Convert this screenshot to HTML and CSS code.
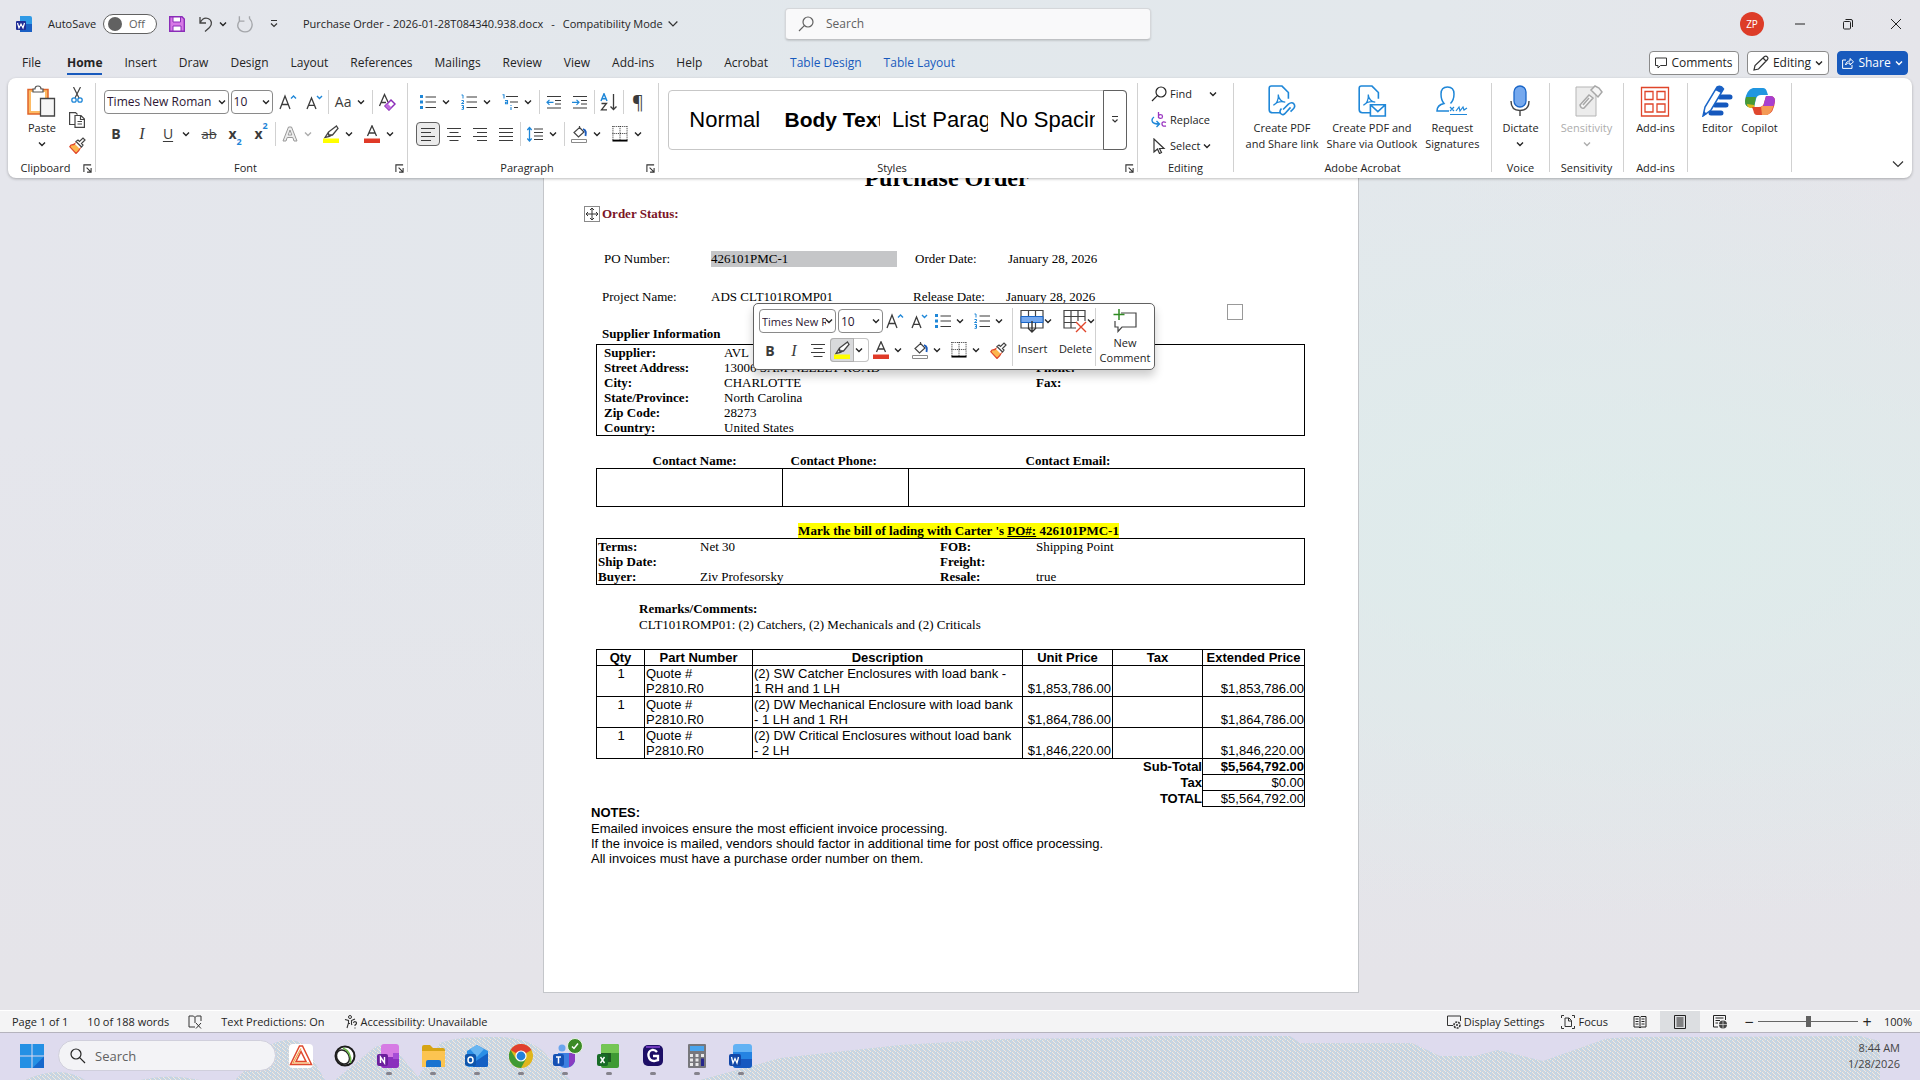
FILE: index.html
```html
<!DOCTYPE html>
<html lang="en">
<head>
<meta charset="utf-8">
<title>Purchase Order - 2026-01-28T084340.938.docx</title>
<link rel="stylesheet" href="styles.css">
</head>
<body>
<svg class="defs" aria-hidden="true">
  <symbol id="chev" viewBox="0 0 8 8"><path d="M1 2.500 4 5.500 7 2.500" fill="none" stroke="currentColor" stroke-width="1.400"/></symbol>
  <symbol id="launch" viewBox="0 0 10 10"><path d="M1 9V1H9M4 4 8.500 8.500M9 4.500V9H4.500" fill="none" stroke="#333" stroke-width="1.200"/></symbol>
  <symbol id="search" viewBox="0 0 16 16"><circle cx="10" cy="6" r="5" fill="none" stroke="currentColor" stroke-width="1.200"/><path d="M6.300 9.700 1 15" stroke="currentColor" stroke-width="1.200"/></symbol>
  <symbol id="grow" viewBox="0 0 18 16"><path d="M1 15 6 2 11 15M2.800 10.500H9.200" fill="none" stroke="#3b3b3b" stroke-width="1.300"/><path d="M12 4.500 14.500 2 17 4.500" fill="none" stroke="#1f87d8" stroke-width="1.400"/></symbol>
  <symbol id="shrink" viewBox="0 0 18 16"><path d="M2 15 6.500 4 11 15M3.500 11.300H9.500" fill="none" stroke="#3b3b3b" stroke-width="1.300"/><path d="M12 2 14.500 4.500 17 2" fill="none" stroke="#1f87d8" stroke-width="1.400"/></symbol>
  <symbol id="bullets" viewBox="0 0 16 16"><path d="M5.500 3H16M5.500 8H16M5.500 13.500H16" stroke="#3b3b3b" stroke-width="1.200"/><path d="M0 1H3V4H0ZM0 6.500H3V9.500H0ZM0 12H3V15H0Z" fill="#1f87d8"/></symbol>
  <symbol id="numbers" viewBox="0 0 16 16"><path d="M5.500 3H16M5.500 8H16M5.500 13.500H16" stroke="#3b3b3b" stroke-width="1.200"/><path d="M.5 1H2V4.500M.5 6.500H2.500V8L.500 9.500H3M.5 11.500H2.500V15.300H.5M1 13.400H2.500" fill="none" stroke="#1f87d8"/></symbol>
  <symbol id="multi" viewBox="0 0 16 16"><path d="M4 2.500H16M8 8H16M12 13.500H16" stroke="#3b3b3b" stroke-width="1.200"/><path d="M.5 .8H2V4.500M3 6.500H5.500V9.800H3.500V8.200H5.500M9 11V12M9 13V16" fill="none" stroke="#1f87d8" stroke-width="1.100"/></symbol>
  <symbol id="outdent" viewBox="0 0 16 16"><path d="M1 2.500H15M9 6.500H15M9 10H15M1 14H15" stroke="#3b3b3b" stroke-width="1.200"/><path d="M7.500 8.300H1M3.500 5.800 1 8.300 3.500 10.800" fill="none" stroke="#1f87d8" stroke-width="1.200"/></symbol>
  <symbol id="indent" viewBox="0 0 16 16"><path d="M1 2.500H15M9 6.500H15M9 10H15M1 14H15" stroke="#3b3b3b" stroke-width="1.200"/><path d="M0 8.300H7M4.500 5.800 7 8.300 4.500 10.800" fill="none" stroke="#1f87d8" stroke-width="1.200"/></symbol>
  <symbol id="al" viewBox="0 0 16 16"><path d="M1 2.500H15M1 6.500H11M1 10.500H15M1 14.500H11" stroke="#3b3b3b" stroke-width="1.200"/></symbol>
  <symbol id="ac" viewBox="0 0 16 16"><path d="M1 2.500H15M3.500 6.500H12.500M1 10.500H15M3.500 14.500H12.500" stroke="#3b3b3b" stroke-width="1.200"/></symbol>
  <symbol id="ar" viewBox="0 0 16 16"><path d="M1 2.500H15M5 6.500H15M1 10.500H15M5 14.500H15" stroke="#3b3b3b" stroke-width="1.200"/></symbol>
  <symbol id="aj" viewBox="0 0 16 16"><path d="M1 2.500H15M1 6.500H15M1 10.500H15M1 14.500H15" stroke="#3b3b3b" stroke-width="1.200"/></symbol>
  <symbol id="spacing" viewBox="0 0 16 16"><path d="M7 3H16M7 6.500H16M7 10H16M7 13.500H16" stroke="#3b3b3b" stroke-width="1.200"/><path d="M2.500 1.500V15M.3 4 2.500 1.500 4.700 4M.3 12.500 2.500 15 4.700 12.500" fill="none" stroke="#1f87d8" stroke-width="1.300"/></symbol>
  <symbol id="sort" viewBox="0 0 18 18"><path d="M1 8 4 .8 7 8M2 5.800H6" fill="none" stroke="#1f87d8" stroke-width="1.500"/><path d="M1.500 10.500H6.500L1.500 16.800H7M13.500 1V16.500M10.500 13.500 13.500 16.500 16.500 13.500" fill="none" stroke="#3b3b3b" stroke-width="1.300"/></symbol>
  <symbol id="high" viewBox="0 0 16 18"><path d="M13.500 1 15 3.500 9.500 10H5.500V7ZM5.500 7 2 12.500 6.500 11.500 9 10" fill="#fff" stroke="#444" stroke-width="1.300"/><path d="M0 13.500H16V18H0Z" fill="#ff0"/></symbol>
  <symbol id="fcolor" viewBox="0 0 16 18"><path d="M3.500 11 8 .8 12.500 11M5 8H11" fill="none" stroke="#3b3b3b" stroke-width="1.300"/><path d="M0 13.500H16V18H0Z" fill="#e03a28"/></symbol>
  <symbol id="bucket" viewBox="0 0 16 18"><path d="M8.500 1V4M8.500 2.500 13 7 7.500 12 3 7.500Z" fill="#fff" stroke="#444" stroke-width="1.200"/><path d="M12 4C15.500 5 15 8 14.500 11" fill="none" stroke="#1b5cbe" stroke-width="1.800"/><path d="M.5 14.500H15.500V17.500H.5Z" fill="#fff" stroke="#8a8a8a"/></symbol>
  <symbol id="borders" viewBox="0 0 16 17"><path d="M.5 0V15M8 0V15M15.500 0V15M0 .5H16M0 8H16" stroke="#222" stroke-width="1" stroke-dasharray="1 1"/><path d="M0 15.500H16" stroke="#000" stroke-width="2"/></symbol>
  <symbol id="brush" viewBox="0 0 17 17"><path d="M2 8C4 8 5.500 7.500 7 6L11.500 10.500C10.500 13 9 15 7 16.500L.8 9.800Z" fill="#fcb64e" stroke="#e0452a" stroke-width="1.200"/><path d="M7 6 11.500 10.500" stroke="#fff" stroke-width="3"/><path d="M7 4.500 9 3 10.500 4.500 14 1 16 3 12.500 6.500 14 8 12.500 10Z" fill="#fff" stroke="#444" stroke-width="1.200"/></symbol>
  <symbol id="pdf" viewBox="0 0 28 30"><path d="M20 9V7L14 1H4Q2 1 2 3V23Q2 26 5 26H13M20 7V13" fill="none" stroke="#1f87d8" stroke-width="1.500"/><path d="M6 19C9 18 11 13 10.500 9C10.500 13 14 16 17 16C13 15 9 16 6 19Z" fill="none" stroke="#1f87d8" stroke-width="1.200"/></symbol>
</svg>

<div class="window">
<header class="titlebar">
  <div class="quick">
    <svg class="i16" viewBox="0 0 16 16"><path d="M4 0H14Q16 0 16 2V16H4Z" fill="#2f9ae6"/><path d="M4 8H16V16H4Z" fill="#1a5fc4"/><rect y="5" width="10" height="9" rx="1" fill="#1f2c96"/><path d="M1.500 7 3 12 5 8 7 12 8.500 7" fill="none" stroke="#fff" stroke-width="1.200"/></svg>
    <span class="autosave">AutoSave</span>
    <button class="toggle" role="switch" aria-checked="false"><i></i>Off</button>
    <button class="plain"><svg class="i16" viewBox="0 0 16 16"><path d="M.7.700H13L15.300 3V15.300H.7Z" fill="#d779e6" stroke="#8a2db8" stroke-width="1.400"/><path d="M4 1H11.500V6H4ZM4 10H12V15H4Z" fill="#fff" stroke="#8a2db8"/></svg></button>
    <button class="plain undo"><svg class="i16" viewBox="0 0 16 16"><path d="M2 1V7H8M2 7C4 3 7 1.500 10 2.500C14 4 14.500 8.500 11.500 11.500L7 15.500" fill="none" stroke="#444" stroke-width="1.300"/></svg><svg class="i8"><use href="#chev"/></svg></button>
    <button class="plain dim"><svg class="i18" viewBox="0 0 16 16"><path d="M3 1V5.500H7.500M3 5.500C-.5 10 3 15 8 15C14 15 16.500 8 12 3M12 3V1" fill="none" stroke="#a4a6aa" stroke-width="1.200"/></svg></button>
    <button class="plain more"><svg class="i8" viewBox="0 0 8 8"><path d="M1 .5H7M1 3.500 4 6.500 7 3.500" fill="none" stroke="#333" stroke-width="1.200"/></svg></button>
    <span class="docname"><span>Purchase Order - 2026-01-28T084340.938.docx</span><span>-</span><span>Compatibility Mode</span></span>
    <svg class="i10" viewBox="0 0 8 8"><path d="M.5 2 4 5.500 7.500 2" fill="none" stroke="#333"/></svg>
  </div>
  <label class="finder"><svg class="i16"><use href="#search"/></svg><input type="text" placeholder="Search"></label>
  <div class="sysbtns">
    <button class="avatar">ZP</button>
    <button class="plain"><svg class="i12" viewBox="0 0 12 12"><path d="M1 6H11" stroke="#222"/></svg></button>
    <button class="plain"><svg class="i12" viewBox="0 0 12 12"><rect x="1.500" y="3.500" width="7" height="7.500" rx="1" fill="none" stroke="#222"/><path d="M3.500 1.500H9Q10.500 1.500 10.500 3V9" fill="none" stroke="#222"/></svg></button>
    <button class="plain"><svg class="i12" viewBox="0 0 12 12"><path d="M1 1 11 11M11 1 1 11" stroke="#222"/></svg></button>
  </div>
</header>

<nav class="tabs">
  <a href="#" class="file">File</a><a href="#" class="on">Home</a><a href="#">Insert</a><a href="#">Draw</a><a href="#">Design</a><a href="#">Layout</a><a href="#">References</a><a href="#">Mailings</a><a href="#">Review</a><a href="#">View</a><a href="#">Add-ins</a><a href="#">Help</a><a href="#">Acrobat</a><a href="#" class="ctx">Table Design</a><a href="#" class="ctx">Table Layout</a>
  <div class="tabbtns">
    <button class="w90"><svg class="i12" viewBox="0 0 12 12"><path d="M.5 1H11.500V8.500H5.500L3 11V8.500H.5Z" fill="none" stroke="#333"/></svg>Comments</button>
    <button class="w82"><svg class="i16" viewBox="0 0 16 16"><path d="M1 15 2 10.500 11.500 1.500Q13 .5 14.300 1.800Q15.500 3 14.500 4.500L5.500 14ZM10 3 13 6" fill="none" stroke="#333" stroke-width="1.200"/></svg>Editing<svg class="i8"><use href="#chev"/></svg></button>
    <button class="share"><svg class="i12" viewBox="0 0 12 12"><path d="M4 3H.6V11.400H10V8M3.500 8C4 5 6 4 8 4V1.500L11.500 4.800 8 8V6C6 6 4.500 6.500 3.500 8Z" fill="none" stroke="#fff"/></svg>Share<svg class="i8"><use href="#chev"/></svg></button>
  </div>
</nav>

<section class="ribbon">
  <div class="group g-clip">
    <div class="body split">
      <button class="big"><svg class="i32" viewBox="0 0 32 32"><path d="M2 4.500H22V29H2Z" fill="#fdbb64" stroke="#e0642a" stroke-width="1.500"/><path d="M5 7H19V26H5Z" fill="#fff"/><path d="M7 7V4H9Q9 1 12 1Q15 1 15 4H17V7Z" fill="#fff" stroke="#555" stroke-width="1.200"/><path d="M14.500 13.500H28.500V31H14.500Z" fill="#f6f6f6" stroke="#444" stroke-width="1.300"/></svg>Paste<svg class="i8"><use href="#chev"/></svg></button>
      <div class="stack">
        <button class="tool"><svg class="i16" viewBox="0 0 16 16"><path d="M4.500 0 10 11M11.500 0 6 11" stroke="#444" stroke-width="1.200"/><circle cx="5" cy="13" r="2.200" fill="none" stroke="#1f87d8" stroke-width="1.300"/><circle cx="11" cy="13" r="2.200" fill="none" stroke="#1f87d8" stroke-width="1.300"/></svg></button>
        <button class="tool"><svg class="i16" viewBox="0 0 16 16"><path d="M6 12.500H.6V.6H6.500L8.500 2.500" fill="none" stroke="#444" stroke-width="1.200"/><path d="M6 3.500H12L15.400 7V15.400H6ZM11.500 3.500V7.500H15.400M8.500 9.500H13M8.500 12H13" fill="#fff" stroke="#444" stroke-width="1.200"/></svg></button>
        <button class="tool"><svg class="i17"><use href="#brush"/></svg></button>
      </div>
    </div>
    <div class="foot"><span>Clipboard</span><button><svg class="i9"><use href="#launch"/></svg></button></div>
  </div>
  <div class="rule"></div>

  <div class="group g-font">
    <div class="body rows">
      <div class="row">
        <span class="combo face"><select aria-label="Font"><option>Times New Roman</option></select><svg class="i8"><use href="#chev"/></svg></span>
        <span class="combo size"><select aria-label="Font size"><option>10</option></select><svg class="i8"><use href="#chev"/></svg></span>
        <button class="tool"><svg class="i18"><use href="#grow"/></svg></button><button class="tool"><svg class="i18"><use href="#shrink"/></svg></button>
        <i class="sep"></i>
        <button class="tool aa">Aa</button><button class="drop"><svg class="i8"><use href="#chev"/></svg></button>
        <i class="sep"></i>
        <button class="tool"><svg class="i18" viewBox="0 0 18 18"><path d="M1.500 13 6.500 1.500 10 9M3 9.500H8" fill="none" stroke="#3b3b3b" stroke-width="1.300"/><path d="M13 7 17 11 11 17 7 13Z" fill="#fff" stroke="#8a2db8" stroke-width="1.500"/><path d="M9.500 10.500 13.500 14.500 11 17 7 13Z" fill="#c06be0"/></svg></button>
      </div>
      <div class="row back">
        <button class="tool b">B</button><button class="tool it">I</button><button class="tool u">U</button><button class="drop"><svg class="i8"><use href="#chev"/></svg></button>
        <button class="tool st">ab</button><button class="tool b">x<sub>2</sub></button><button class="tool b">x<sup>2</sup></button>
        <i class="sep"></i>
        <button class="tool"><svg class="i16" viewBox="0 0 16 16"><path d="M1 15 6.500 1H9.500L15 15H12L10.800 11.500H5.200L4 15ZM6.200 9H9.800L8 4Z" fill="#eee" stroke="#999"/></svg></button><button class="drop dim"><svg class="i8"><use href="#chev"/></svg></button>
        <button class="tool"><svg class="i18"><use href="#high"/></svg></button><button class="drop"><svg class="i8"><use href="#chev"/></svg></button>
        <button class="tool"><svg class="i18"><use href="#fcolor"/></svg></button><button class="drop"><svg class="i8"><use href="#chev"/></svg></button>
      </div>
    </div>
    <div class="foot"><span>Font</span><button><svg class="i9"><use href="#launch"/></svg></button></div>
  </div>
  <div class="rule"></div>

  <div class="group g-para">
    <div class="body rows">
      <div class="row">
        <button class="tool"><svg class="i16"><use href="#bullets"/></svg></button><button class="drop"><svg class="i8"><use href="#chev"/></svg></button>
        <button class="tool"><svg class="i16"><use href="#numbers"/></svg></button><button class="drop"><svg class="i8"><use href="#chev"/></svg></button>
        <button class="tool"><svg class="i16"><use href="#multi"/></svg></button><button class="drop"><svg class="i8"><use href="#chev"/></svg></button>
        <i class="sep"></i>
        <button class="tool"><svg class="i16"><use href="#outdent"/></svg></button><button class="tool"><svg class="i16"><use href="#indent"/></svg></button>
        <i class="sep"></i>
        <button class="tool"><svg class="i18"><use href="#sort"/></svg></button>
        <i class="sep"></i>
        <button class="tool pil">¶</button>
      </div>
      <div class="row">
        <button class="tool pressed"><svg class="i16"><use href="#al"/></svg></button><button class="tool"><svg class="i16"><use href="#ac"/></svg></button><button class="tool"><svg class="i16"><use href="#ar"/></svg></button><button class="tool"><svg class="i16"><use href="#aj"/></svg></button>
        <i class="sep"></i>
        <button class="tool"><svg class="i16"><use href="#spacing"/></svg></button><button class="drop"><svg class="i8"><use href="#chev"/></svg></button>
        <i class="sep"></i>
        <button class="tool"><svg class="i18"><use href="#bucket"/></svg></button><button class="drop"><svg class="i8"><use href="#chev"/></svg></button>
        <button class="tool"><svg class="i16"><use href="#borders"/></svg></button><button class="drop"><svg class="i8"><use href="#chev"/></svg></button>
      </div>
    </div>
    <div class="foot"><span>Paragraph</span><button><svg class="i9"><use href="#launch"/></svg></button></div>
  </div>
  <div class="rule"></div>

  <div class="group g-style">
    <div class="body">
      <div class="gallery">
        <button class="st-item mid">Normal</button><button class="st-item b">Body Text</button><button class="st-item">List Paragraph</button><button class="st-item">No Spacing</button>
        <button class="st-more"><svg class="i8" viewBox="0 0 8 8"><path d="M1 .5H7M1.500 3.500 4 6 6.500 3.500" fill="none" stroke="#333" stroke-width="1.200"/></svg></button>
      </div>
    </div>
    <div class="foot"><span>Styles</span><button><svg class="i9"><use href="#launch"/></svg></button></div>
  </div>
  <div class="rule"></div>

  <div class="group g-edit">
    <div class="body editlist">
      <button><svg class="i16"><use href="#search"/></svg>Find<svg class="i8 far"><use href="#chev"/></svg></button>
      <button><svg class="i16" viewBox="0 0 16 16"><path d="M7.500 0V6M7.500 3.500Q9 2 11 3Q12 4.500 11 6Q9 7 7.500 5.500M15 10.500Q12 9 11 11Q10.500 15 15 14" fill="none" stroke="#9a35c0" stroke-width="1.300"/><path d="M3 5Q0 7 1.500 10Q3 12 8 12M5.500 9 8.500 12 5.500 15" fill="none" stroke="#1f87d8" stroke-width="1.400"/></svg>Replace</button>
      <button><svg class="i16" viewBox="0 0 16 16"><path d="M3 1V14L6.500 11 8.500 15.500 10.500 14.500 8.500 10.500H13Z" fill="#fff" stroke="#333" stroke-width="1.200"/></svg>Select<svg class="i8"><use href="#chev"/></svg></button>
    </div>
    <div class="foot"><span>Editing</span></div>
  </div>
  <div class="rule"></div>

  <div class="group g-acro">
    <div class="body bigs">
      <button class="big"><svg class="i32" viewBox="0 0 28 30"><use href="#pdf" width="28" height="30"/><path d="M15 23 20 18Q23 15.500 25 17.500Q27 20 24.500 22.500L22 25M22 21 17.500 26Q15 29 13 27Q11 25 13.500 22" fill="none" stroke="#1f87d8" stroke-width="1.500"/></svg>Create PDF<br>and Share link</button>
      <button class="big"><svg class="i32" viewBox="0 0 28 30"><use href="#pdf" width="28" height="30"/><path d="M12.500 18.500H26.500V29H12.500ZM12.500 18.500 19.500 25 26.500 18.500" fill="#fff" stroke="#1f87d8" stroke-width="1.500"/></svg>Create PDF and<br>Share via Outlook</button>
      <button class="big"><svg class="i32" viewBox="0 0 32 32"><path d="M13 26H1Q1 20 8 18.500Q5 15 5 9Q5 2 11.500 2Q18 2 18 9Q18 15 14.500 18.500" fill="none" stroke="#1f87d8" stroke-width="1.500"/><path d="M14 22 18 26M18 22 14 26M20 26 23 22 24 26 27 22 28 25 31 23M14 29.500H31" fill="none" stroke="#1f87d8" stroke-width="1.200"/></svg>Request<br>Signatures</button>
    </div>
    <div class="foot"><span>Adobe Acrobat</span></div>
  </div>
  <div class="rule"></div>

  <div class="group g-voice">
    <div class="body bigs"><button class="big"><svg class="i32" viewBox="0 0 32 32"><rect x="10" y="1" width="12" height="21" rx="6" fill="#76a9ee" stroke="#1a66c8" stroke-width="1.300"/><path d="M7 16Q7 25.500 16 25.500Q25 25.500 25 16M16 25.500V31" fill="none" stroke="#444" stroke-width="1.400"/></svg>Dictate<svg class="i8"><use href="#chev"/></svg></button></div>
    <div class="foot"><span>Voice</span></div>
  </div>
  <div class="rule"></div>

  <div class="group g-sens">
    <div class="body bigs"><button class="big dim"><svg class="i32" viewBox="0 0 32 32"><path d="M5 2H25V31H5Z" fill="#ececec" stroke="#b5b5b5"/><path d="M9 20 18 10 22 13 13 23Q10 24 9 20ZM12 20 18 13M20 5 24 1 28 3 31 7 27 12Z" fill="#f6f6f6" stroke="#a8a8a8" stroke-width="1.500"/></svg>Sensitivity<svg class="i8"><use href="#chev"/></svg></button></div>
    <div class="foot"><span>Sensitivity</span></div>
  </div>
  <div class="rule"></div>

  <div class="group g-add">
    <div class="body bigs"><button class="big"><svg class="i32" viewBox="0 0 32 32"><path d="M2.500 2.500H29.500V31H2.500ZM6 6.500H14V14.500H6ZM18 6.500H26V14.500H18ZM6 19H14V27H6ZM18 19H26V27H18Z" fill="none" stroke="#e0452a" stroke-width="1.300"/></svg>Add-ins</button></div>
    <div class="foot"><span>Add-ins</span></div>
  </div>
  <div class="rule"></div>

  <div class="group g-copilot">
    <div class="body bigs">
      <button class="big"><svg class="i32" viewBox="0 0 32 32"><path d="M19 12H29M14 20H25M10 28H20" stroke="#1558bd" stroke-width="5" stroke-linecap="round"/><path d="M2 31 4 22 16 2Q20 0 22.500 4L10 25Z" fill="#fff" stroke="#1a66c8" stroke-width="1.500"/><path d="M16 2Q20 0 22.500 4L20 8 14 5Z" fill="#1a5fc4"/><path d="M2 31 3 26 6 29Z" fill="#1a5fc4"/></svg>Editor</button>
      <button class="big"><svg class="i32" viewBox="0 0 32 32"><path d="M9 3H19Q22 3 23 7L24 10H17Q13 10 12 14L10 22H6Q1 22 1 16Q2 5 9 3Z" fill="#2196e0"/><path d="M2 12H12L10 22H6Q1 22 1 16Z" fill="#4a9a34"/><path d="M3 19 10 20 11 23H6Q3 22 3 19Z" fill="#dcb51d"/><path d="M23 30H13Q10 30 9.500 26L8 22H15Q19 22 20 18L22 11H26Q31 11 31 16Q30 28 23 30Z" fill="#e0482e"/><path d="M22 11H26Q31 11 31 16Q30.500 19 29.500 21H19Q20 20 20 18Z" fill="#a83fd0"/><path d="M17 21H29.500Q27 29 23 30H18Z" fill="#f49a55"/></svg>Copilot</button>
    </div>
  </div>
  <div class="rule"></div>
  <button class="collapse"><svg class="i12" viewBox="0 0 12 12"><path d="M1 3.500 6 8.500 11 3.500" fill="none" stroke="#333" stroke-width="1.200"/></svg></button>
</section>

<main class="workspace">
  <article class="page">
    <h1>Purchase Order</h1>
    <span class="anchor"><svg class="i14" viewBox="0 0 14 14"><path d="M7 1V13M1 7H13M5 3 7 1 9 3M5 11 7 13 9 11M3 5 1 7 3 9M11 5 13 7 11 9" fill="none" stroke="#333"/></svg></span>
    <span class="handle"></span>
    <h2 class="status">Order Status:</h2>
    <div class="facts in"><span>PO Number:</span><mark>426101PMC-1</mark><span>Order Date:</span><span>January 28, 2026</span></div>
    <div class="facts second"><span>Project Name:</span><span>ADS CLT101ROMP01</span><span>Release Date:</span><span>January 28, 2026</span></div>
    <h2 class="supplier">Supplier Information</h2>
    <table class="boxed info">
      <tr><th>Supplier:</th><td>AVL</td><th></th></tr>
      <tr><th>Street Address:</th><td>13006 SAM NEELLY ROAD</td><th>Phone:</th></tr>
      <tr><th>City:</th><td>CHARLOTTE</td><th>Fax:</th></tr>
      <tr><th>State/Province:</th><td>North Carolina</td><th></th></tr>
      <tr><th>Zip Code:</th><td>28273</td><th></th></tr>
      <tr><th>Country:</th><td>United States</td><th></th></tr>
    </table>
    <table class="contacts">
      <thead><tr><th class="c1">Contact Name:</th><th class="c2">Contact Phone:</th><th class="c3">Contact Email:</th></tr></thead>
      <tbody><tr><td></td><td></td><td></td></tr></tbody>
    </table>
    <p class="lading"><span>Mark the bill of lading with Carter 's <u>PO#:</u> 426101PMC-1</span></p>
    <table class="boxed terms">
      <tr><th>Terms:</th><td>Net 30</td><th>FOB:</th><td>Shipping Point</td></tr>
      <tr><th>Ship Date:</th><td></td><th>Freight:</th><td></td></tr>
      <tr><th>Buyer:</th><td>Ziv Profesorsky</td><th>Resale:</th><td>true</td></tr>
    </table>
    <div class="remarks"><b>Remarks/Comments:</b><p>CLT101ROMP01: (2) Catchers, (2) Mechanicals and (2) Criticals</p></div>
    <table class="items">
      <colgroup><col class="k1"><col class="k2"><col class="k3"><col class="k4"><col class="k5"><col></colgroup>
      <thead><tr><th>Qty</th><th>Part Number</th><th>Description</th><th>Unit Price</th><th>Tax</th><th>Extended Price</th></tr></thead>
      <tbody>
        <tr><td class="q">1</td><td>Quote #<br>P2810.R0</td><td>(2) SW Catcher Enclosures with load bank -<br>1 RH and 1 LH</td><td class="n">$1,853,786.00</td><td></td><td class="n">$1,853,786.00</td></tr>
        <tr><td class="q">1</td><td>Quote #<br>P2810.R0</td><td>(2) DW Mechanical Enclosure with load bank<br>- 1 LH and 1 RH</td><td class="n">$1,864,786.00</td><td></td><td class="n">$1,864,786.00</td></tr>
        <tr><td class="q">1</td><td>Quote #<br>P2810.R0</td><td>(2) DW Critical Enclosures without load bank<br>- 2 LH</td><td class="n">$1,846,220.00</td><td></td><td class="n">$1,846,220.00</td></tr>
      </tbody>
      <tfoot>
        <tr><th colspan="5">Sub-Total</th><td class="n"><b>$5,564,792.00</b></td></tr>
        <tr><th colspan="5">Tax</th><td class="n">$0.00</td></tr>
        <tr><th colspan="5">TOTAL</th><td class="n">$5,564,792.00</td></tr>
      </tfoot>
    </table>
    <div class="notes"><b>NOTES:</b><p>Emailed invoices ensure the most efficient invoice processing.</p><p>If the invoice is mailed, vendors should factor in additional time for post office processing.</p><p>All invoices must have a purchase order number on them.</p></div>

    <div class="mini">
      <div class="rows">
        <div class="row">
          <span class="combo face"><select aria-label="Font"><option>Times New Roman</option></select><svg class="i8"><use href="#chev"/></svg></span>
          <span class="combo size"><select aria-label="Font size"><option>10</option></select><svg class="i8"><use href="#chev"/></svg></span>
          <button class="tool"><svg class="i18"><use href="#grow"/></svg></button><button class="tool"><svg class="i18"><use href="#shrink"/></svg></button>
          <button class="tool"><svg class="i16"><use href="#bullets"/></svg></button><button class="drop"><svg class="i8"><use href="#chev"/></svg></button>
          <button class="tool"><svg class="i16"><use href="#numbers"/></svg></button><button class="drop"><svg class="i8"><use href="#chev"/></svg></button>
        </div>
        <div class="row back">
          <button class="tool b">B</button><button class="tool it">I</button><button class="tool"><svg class="i16"><use href="#ac"/></svg></button>
          <span class="pair"><button class="tool"><svg class="i18"><use href="#high"/></svg></button><button class="drop"><svg class="i8"><use href="#chev"/></svg></button></span>
          <button class="tool"><svg class="i18"><use href="#fcolor"/></svg></button><button class="drop"><svg class="i8"><use href="#chev"/></svg></button>
          <button class="tool"><svg class="i18"><use href="#bucket"/></svg></button><button class="drop"><svg class="i8"><use href="#chev"/></svg></button>
          <button class="tool"><svg class="i16"><use href="#borders"/></svg></button><button class="drop"><svg class="i8"><use href="#chev"/></svg></button>
          <button class="tool"><svg class="i17"><use href="#brush"/></svg></button>
        </div>
      </div>
      <div class="cmd wide">
        <button><span><svg class="i24" viewBox="0 0 24 24"><path d="M1 1.500H23V19H1ZM8.500 1.500V19M15.500 1.500V19" fill="#fff" stroke="#444" stroke-width="1.200"/><path d="M1 7.500H23V13.500H1Z" fill="#76a9ee" stroke="#1a66c8"/><path d="M12 12V23M8 19 12 23 16 19" fill="none" stroke="#333" stroke-width="1.400"/></svg><svg class="i8"><use href="#chev"/></svg></span>Insert</button>
        <button><span><svg class="i24" viewBox="0 0 24 24"><path d="M13 19H1V1.500H22V12M8 1.500V19M15 1.500V12M1 7.500H22M1 13.500H14" fill="none" stroke="#444" stroke-width="1.200"/><path d="M13 13 23 23M23 13 13 23" stroke="#e0452a" stroke-width="1.400"/></svg><svg class="i8"><use href="#chev"/></svg></span>Delete</button>
      </div>
      <div class="cmd">
        <button class="tall"><svg class="i24" viewBox="0 0 24 24"><path d="M8 4H23V18H9L5 22.500V18H2V12" fill="#fff" stroke="#444" stroke-width="1.200"/><path d="M6 0V11M.5 5.500H11.500" stroke="#2f8a22" stroke-width="1.500"/></svg>New<br>Comment</button>
      </div>
    </div>
  </article>
</main>

<footer class="statusbar">
  <span>Page 1 of 1</span><span>10 of 188 words</span>
  <svg class="i14" viewBox="0 0 14 14"><path d="M7 12H1V1H5.500L7 2.500 8.500 1H13V6M7 2.500V8M8 8 13 13.500M13 8 8 13.500" fill="none" stroke="#333"/></svg>
  <span>Text Predictions: On</span>
  <span class="with"><svg class="i14" viewBox="0 0 14 14"><circle cx="6" cy="2" r="1.500" fill="none" stroke="#333"/><path d="M1 4.500 4.500 5.500V8L3 13M11 4 7.500 5.500V9L8 10M4.500 8.500 6 8.500M9.500 8Q10 6 12 7Q13.500 8.500 11 10V11M11 12.500V13.500" fill="none" stroke="#333" stroke-width="1.100"/></svg>Accessibility: Unavailable</span>
  <div class="views">
    <button class="with"><svg class="i14" viewBox="0 0 14 14"><path d="M6 10.500H.5V1H13.500V6" fill="none" stroke="#333"/><circle cx="10" cy="10" r="3" fill="none" stroke="#333" stroke-width="1.600" stroke-dasharray="2 1"/><circle cx="10" cy="10" r="1" fill="#333"/></svg>Display Settings</button>
    <button class="with focus"><svg class="i14" viewBox="0 0 14 14"><path d="M3 .5H.5V3M11 .5H13.500V3M.5 11V13.500H3M13.500 11V13.500H11M4 3H8L10.500 5.500V11.500H4ZM7.500 3V6H10.500" fill="none" stroke="#333"/></svg>Focus</button>
    <button class="view"><svg class="i14" viewBox="0 0 14 14"><path d="M1 1.500H6L7 2.500 8 1.500H13V12H8L7 13 6 12H1ZM7 2.500V13M2.500 4H5.500M2.500 6.500H5.500M2.500 9H5.500M8.500 4H11.500M8.500 6.500H11.500M8.500 9H11.500" fill="none" stroke="#222"/></svg></button>
    <button class="view on"><svg class="i14" viewBox="0 0 14 14"><path d="M1.500 .5H12.500V13.500H1.500ZM3.500 3H10.500M3.500 5H10.500M3.500 7H10.500M3.500 9H10.500M3.500 11H10.500" fill="none" stroke="#222"/></svg></button>
    <button class="view"><svg class="i14" viewBox="0 0 14 14"><path d="M5 12H.5V.5H12.500V5M2.500 3H10.500M2.500 5.500H7M2.500 8H5" fill="none" stroke="#222"/><circle cx="10" cy="9.500" r="4" fill="#444"/><path d="M6 9.500H14M10 5.500V13.500" stroke="#ddd" stroke-width=".7"/></svg></button>
    <span class="zoom"><button>−</button><input type="range" min="0" max="200" value="102" aria-label="Zoom"><button>+</button></span>
    <span class="pct">100%</span>
  </div>
</footer>

<nav class="taskbar">
  <svg class="hills" viewBox="0 0 1920 47" preserveAspectRatio="none">
    <pattern id="grain" width="5" height="4" patternUnits="userSpaceOnUse"><rect width="5" height="4" fill="#d0d4da"/><path d="M0 0H1V1H0ZM2 1H3V2H2ZM4 2H5V3H4ZM1 3H2V4H1Z" fill="#b4d6f0"/><path d="M3 0H4V1H3ZM0 2H1V3H0ZM2 3H3V4H2ZM4 1H5V2H4Z" fill="#eceae6"/></pattern>
    <path d="M25 47Q60 31 85 47ZM140 47Q170 40 200 47ZM235 47 270 12Q290 2 305 12L325 47ZM335 47 375 14Q388 8 400 22L418 44 440 10Q455 3 500 4Q530 5 545 20L570 47ZM700 47 780 25 900 12 1000 6 1100 5 1160 3H1290L1300 10H1412L1440 23H1475L1498 17 1543 28 1605 6Q1620 3 1700 4L1860 3 1880 8V47Z" fill="url(#grain)"/></svg>
  <button class="app start"><svg class="i24" viewBox="0 0 24 24"><path d="M0 0H11.500V11.500H0ZM12.500 0H24V11.500H12.500ZM0 12.500H11.500V24H0ZM12.500 12.500H24V24H12.500Z" fill="#2490e4"/><path d="M12.500 24H24V12.500Z" fill="#1668cc"/></svg></button>
  <label class="pill"><svg class="i16 flip"><use href="#search"/></svg><input type="text" placeholder="Search"></label>
  <div class="apps">
    <button class="app"><svg class="i24" viewBox="0 0 24 24"><rect width="24" height="24" rx="4" fill="#fff"/><path d="M10.500 2H13.500L22.500 20.500H1.500ZM12 7.500 7 17.500H17Z" fill="none" stroke="#e0482e" stroke-width="1.500"/><path d="M12 4.500 4 19H20" fill="none" stroke="#f2a54c" stroke-width="1.200"/></svg></button>
    <button class="app"><svg class="i24" viewBox="0 0 24 24"><circle cx="12" cy="12" r="9.500" fill="#fff" stroke="#1c1c1c" stroke-width="2"/><ellipse cx="10" cy="13" rx="6" ry="7.500" transform="rotate(-35 10 13)" fill="none" stroke="#222" stroke-width="1.500"/><path d="M10 4Q19 8 17.500 19" fill="none" stroke="#6bb84a" stroke-width="1.500"/></svg></button>
    <button class="app run"><svg class="i24" viewBox="0 0 24 24"><rect x="4" y="0" width="18" height="24" rx="3" fill="#d67be4"/><path d="M4 13H22V21Q22 24 19 24H7Q4 24 4 21Z" fill="#8b30bd"/><path d="M16 9H22V15H16Z" fill="#a64dd6"/><rect y="10" width="11" height="12" rx="2" fill="#6b1f9c"/><path d="M3.500 19V13L7.500 19V13" fill="none" stroke="#fff" stroke-width="1.400"/></svg></button>
    <button class="app run"><svg class="i24" viewBox="0 0 24 24"><path d="M1 3Q1 1 3 1H9L12 4H22Q24 4 24 6V23H1Z" fill="#d7a415"/><path d="M1 7H24V23H1Z" fill="#fcc451"/><path d="M5 23V18Q5 16 7 16H18Q20 16 20 18V23Z" fill="#1a73d0"/></svg></button>
    <button class="app run"><svg class="i24" viewBox="0 0 24 24"><path d="M2 7 12 1 23 7V21Q23 23 21 23H4Q2 23 2 21Z" fill="#2b8fe6"/><path d="M5 5 12 1 19 5 12 13Z" fill="#67b5f2"/><path d="M23 9 8 19V23H21Q23 23 23 21Z" fill="#1560c4"/><rect y="10" width="11" height="12" rx="2" fill="#0f55ab"/><ellipse cx="5.500" cy="16" rx="2.500" ry="3" fill="none" stroke="#fff" stroke-width="1.500"/></svg></button>
    <button class="app run"><svg class="i24" viewBox="0 0 24 24"><circle cx="12" cy="12" r="12" fill="#dfb61d"/><path d="M12 12 1.600 6A12 12 0 0 1 22.400 6Z" fill="#e0402e"/><path d="M1.600 6A12 12 0 0 0 12 24L17 15H7Z" fill="#3f9a34"/><circle cx="12" cy="12" r="5.600" fill="#fff"/><circle cx="12" cy="12" r="4.400" fill="#2380dc"/></svg></button>
    <button class="app run badge"><svg class="i24" viewBox="0 0 24 24"><circle cx="9" cy="4" r="3.500" fill="#6aa5ee"/><path d="M5 9H22V17Q20 24 12 24Q5 23 5 16Z" fill="#3d7fe0"/><path d="M16 9H22V17Q20 22 16 23Z" fill="#8a3cc0"/><rect y="10" width="11" height="12" rx="2" fill="#1551b4"/><path d="M3 13H8M5.500 13V19.500" stroke="#fff" stroke-width="1.500"/></svg><svg class="tick" viewBox="0 0 16 16"><circle cx="8" cy="8" r="7.500" fill="#3c8a26" stroke="#e8f4e4"/><path d="M5 8.500 7 10.500 11 5.500" fill="none" stroke="#fff" stroke-width="1.500"/></svg></button>
    <button class="app run"><svg class="i24" viewBox="0 0 24 24"><rect x="4" width="18" height="24" rx="2" fill="#3f9a34"/><path d="M4 2Q4 0 6 0H20Q22 0 22 2V9H4Z" fill="#74c654"/><path d="M4 9H14V18H4Z" fill="#1d5c22"/><rect y="10" width="11" height="12" rx="2" fill="#176b26"/><path d="M3.500 13 7.500 19M7.500 13 3.500 19" stroke="#fff" stroke-width="1.400"/></svg></button>
    <button class="app run"><svg class="i24" viewBox="0 0 24 24"><rect x="2" y="1" width="20" height="21" rx="5" fill="#1d0f66"/><path d="M16 8Q14 5.500 11 6Q7 7 7.500 12Q8.500 17 13 17L17 16V12H12" fill="none" stroke="#fff" stroke-width="2.300"/><path d="M5 3H19" stroke="#8a49d8" stroke-width="1.500"/></svg></button>
    <button class="app run"><svg class="i24" viewBox="0 0 24 24"><rect x="3" width="18" height="24" rx="1" fill="#77777c"/><path d="M5 2H19V7H5Z" fill="#4aa5ee"/><path d="M5 10H8V13H5ZM10.500 10H13.500V13H10.500ZM16 10H19V13H16ZM5 14.500H8V17.500H5ZM10.500 14.500H13.500V17.500H10.500ZM5 19H8V22H5ZM10.500 19H13.500V22H10.500Z" fill="#e8e8e8"/><path d="M16 14.500H19V22H16Z" fill="#26268c"/></svg></button>
    <button class="app run"><svg class="i24" viewBox="0 0 24 24"><rect x="4" width="19" height="24" rx="3" fill="#62b2f4"/><path d="M4 8H23V16H4Z" fill="#2483e2"/><path d="M4 15H23V21Q23 24 20 24H7Q4 24 4 21Z" fill="#1658c0"/><rect y="10" width="12" height="12" rx="2" fill="#1247a8"/><path d="M2.500 13 4 19 6 14.500 8 19 9.500 13" fill="none" stroke="#fff" stroke-width="1.300"/></svg></button>
  </div>
  <time>8:44 AM<br>1/28/2026</time>
</nav>
</div>
</body>
</html>
```
FILE: styles.css
```css
* { box-sizing: border-box; }
body {
  margin: 0;
  font: 12px/16px "Open Sans", "Noto Sans", sans-serif;
  color: #242424;
}
button, input, select { font: inherit; color: inherit; }
button { background: none; border: 0; padding: 0; white-space: nowrap; }
a { color: inherit; text-decoration: none; }
h1, h2, p { margin: 0; }
table { border-collapse: collapse; border-spacing: 0; }
th, td { padding: 0; text-align: left; }
svg { display: block; flex: none; }
.defs { width: 0; height: 0; position: absolute; }

.i8 { width: 8px; height: 8px; }
.i9 { width: 9px; height: 9px; }
.i10 { width: 10px; height: 10px; }
.i12 { width: 12px; height: 12px; }
.i14 { width: 14px; height: 14px; }
.i16 { width: 16px; height: 16px; }
.i17 { width: 17px; height: 17px; }
.i18 { width: 18px; height: 18px; }
.i24 { width: 24px; height: 24px; }
.i32 { width: 32px; height: 32px; }
.dim { color: #adadad; }
.b { font-weight: 700; }

.window {
  display: flex;
  flex-direction: column;
  height: 100vh;
  overflow: hidden;
  background:
    radial-gradient(ellipse 45% 35% at 85% 50%, #deeceb 0, #deeceb00 100%),
    linear-gradient(180deg, #e5e4e900 40%, #e5e4e9 90%),
    linear-gradient(90deg, #e5e6ec 0, #e2e8ec 45%, #e3e8ec 75%, #e5e5ea 100%);
}

/* title bar */
.titlebar {
  display: grid;
  grid-template-columns: 1fr 366px 1fr;
  align-items: center;
  height: 48px;
  padding-left: 16px;
  flex: none;
}
.quick { display: flex; align-items: center; height: 48px; }
.autosave { margin-left: 16px; width: 55px; font-size: 11px; }
.toggle {
  display: flex;
  align-items: center;
  gap: 7px;
  width: 54px;
  height: 20px;
  margin-right: 12px;
  padding-left: 4px;
  border: 1px solid #616161;
  border-radius: 10px;
  background: #fff;
  color: #616161;
  font-size: 11px;
}
.toggle i { width: 14px; height: 14px; border-radius: 7px; background: #616161; }
.plain { display: flex; align-items: center; justify-content: center; }
.undo { margin-left: 13px; gap: 5px; }
.quick .dim { margin-left: 9px; }
.more { margin: 0 25px 0 16px; }
.docname { display: flex; gap: 8px; margin-right: 5px; font-size: 11px; }
.finder {
  display: flex;
  align-items: center;
  gap: 12px;
  height: 32px;
  padding: 0 12px;
  border: 1px solid #d5d7da;
  border-bottom-color: #bfc1c4;
  border-radius: 4px;
  background: #f9f9fa;
  color: #616161;
  box-shadow: 0 1px 2px #0002;
}
input[type="text"] { flex: 1; min-width: 0; border: 0; padding: 0; background: none; outline: 0; }
input::placeholder { color: #616161; opacity: 1; }
.sysbtns { display: flex; justify-content: flex-end; align-items: center; }
.sysbtns .plain { width: 48px; height: 32px; }
.sysbtns .avatar {
  width: 24px;
  height: 24px;
  margin-right: 12px;
  border-radius: 12px;
  background: #dd3c28;
  color: #fff;
  font-size: 10px;
}

/* ribbon tabs */
.tabs { display: flex; align-items: center; gap: 22px; height: 30px; padding: 0 12px 0 22px; flex: none; }
.tabs a { height: 23px; padding-top: 3px; }
.tabs .file { margin-right: 4px; }
.tabs .on { font-weight: 700; box-shadow: inset 0 -2px #185abd; }
.tabs .ctx { color: #185abd; }
.tabbtns { display: flex; gap: 8px; margin-left: auto; }
.tabbtns button {
  display: flex;
  align-items: center;
  justify-content: center;
  gap: 4px;
  height: 24px;
  border: 1px solid #8a8a8a;
  border-radius: 4px;
  background: #fff;
}
.w90 { width: 90px; }
.w82 { width: 82px; }
.tabbtns .share { width: 71px; background: #185abd; border-color: #185abd; color: #fff; }

/* ribbon */
.ribbon {
  display: flex;
  flex: none;
  height: 100px;
  margin: 0 8px;
  padding-top: 5px;
  border-radius: 8px;
  background: #fff;
  box-shadow: 0 1px 3px #0004;
  position: relative;
  z-index: 2;
  font-size: 11px;
}
.rule { width: 1px; height: 89px; background: #d1d1d1; }
.group { display: flex; flex-direction: column; height: 93px; }
.body { height: 78px; flex: none; }
.foot { display: flex; align-items: center; height: 14px; line-height: 14px; }
.foot span { flex: 1; text-align: center; }
.foot button { width: 12px; }
.g-clip { width: 87px; }
.g-font { width: 311px; }
.g-para { width: 250px; }
.g-style { width: 478px; }
.g-edit { width: 95px; }
.g-acro { width: 257px; }
.g-voice { width: 57px; }
.g-sens { width: 73px; }
.g-add { width: 63px; }
.g-copilot { width: 103px; }

.split { display: flex; padding-left: 18px; gap: 6px; }
.stack { display: flex; flex-direction: column; gap: 1px; }
.big {
  display: flex;
  flex-direction: column;
  align-items: center;
  align-self: flex-start;
  padding-top: 2px;
  text-align: center;
}
.big .i32 { margin-bottom: 3px; }
.big .i8 { margin-top: 4px; }
.bigs { display: flex; justify-content: center; gap: 8px; }
.g-acro .big { display: block; }
.g-acro .i32 { margin: 0 auto 3px; }

.rows { display: flex; flex-direction: column; gap: 8px; }
.body.rows { padding: 7px 7px 0 8px; }
.g-para .body.rows { padding-left: 7px; }
.row { display: flex; align-items: center; height: 24px; }
.back { margin-left: -1px; }
.tool {
  display: flex;
  align-items: center;
  justify-content: center;
  width: 26px;
  height: 24px;
  font-size: 14px;
  color: #3b3b3b;
}
.drop { display: flex; align-items: center; width: 15px; height: 24px; padding-left: 1px; }
.sep { width: 1px; height: 24px; margin: 0 1px; background: #d1d1d1; }
.it { font-family: "Liberation Serif", serif; font-style: italic; font-size: 16px; }
.u { text-decoration: underline; text-underline-offset: 2px; }
.st { font-size: 13px; text-decoration: line-through; }
.tool sub, .tool sup { font-size: 9px; line-height: 8px; color: #1f87d8; }
.tool sub { align-self: flex-end; }
.tool sup { align-self: flex-start; }
.pil { font-size: 18px; }
.pressed { width: 24px; margin: 0 1px; border: 1px solid #616161; border-radius: 4px; background: #ebebeb; }
.combo { display: grid; align-items: center; height: 24px; margin-right: 2px; border: 1px solid #8a8a8a; border-radius: 4px; background: #fff; }
.combo > * { grid-area: 1 / 1; }
.combo svg { justify-self: end; margin-right: 2px; pointer-events: none; }
.combo select { appearance: none; width: 100%; min-width: 0; height: 22px; padding: 0 12px 0 2px; border: 0; background: none; font-size: 12px; color: #2c1633; text-overflow: clip; }
.face { width: 125px; }
.size { width: 43px; }

.gallery {
  display: flex;
  gap: 12px;
  width: 459px;
  height: 60px;
  margin: 7px 0 0 9px;
  padding-left: 8px;
  border: 1px solid #c7c7c7;
  border-radius: 4px;
}
.st-item { flex: 1; min-width: 0; overflow: hidden; text-align: left; font: 22px/28px "Liberation Sans", Arial, sans-serif; color: #000; }
.st-item.mid { text-align: center; }
.st-item.b { font-weight: 700; font-size: 21px; }
.st-more { display: flex; align-items: center; justify-content: center; width: 24px; margin: -1px -1px -1px -4px; border: 1px solid #616161; border-radius: 0 4px 4px 0; }

.editlist { display: flex; flex-direction: column; gap: 10px; padding: 3px 0 0 13px; }
.editlist button { display: flex; align-items: center; gap: 3px; height: 16px; }
.editlist .far { margin-left: 14px; }
.collapse { margin: 75px 8px 0 auto; align-self: flex-start; }

/* document */
.workspace { display: flex; flex: 1; min-height: 0; justify-content: center; padding: 0 18px 17px 0; overflow: hidden; }
.page {
  position: relative;
  width: 816px;
  padding: 0 53px 0 52px;
  border: 1px solid #c4c6ca;
  border-top: 0;
  background: #fff;
  color: #000;
  font: 13px/15px "Liberation Serif", "Times New Roman", serif;
}
.page h1 { margin-top: -14px; text-align: center; font-size: 24px; line-height: 28px; padding-right: 8px; }
.page h2 { font-size: 13px; line-height: 15px; padding-left: 6px; }
.anchor { position: absolute; left: 40px; top: 28px; border: 1px solid #8a8a8a; }
.handle { position: absolute; left: 683px; top: 126px; width: 16px; height: 16px; border: 1px solid #999; }
.page .status { margin-top: 14px; color: #7b1527; }
.facts { display: grid; grid-template-columns: 109px 202px 93px 1fr; padding-left: 6px; margin-top: 30px; line-height: 16px; }
.facts.in span { padding-left: 2px; }
.facts mark { width: 186px; background: #c5c6c8; color: #000; }
.facts.second { margin-top: 22px; }
.page .supplier { margin-top: 21px; }
.boxed { width: 100%; table-layout: fixed; border: 1px solid #000; border-collapse: separate; }
.boxed tr, .boxed td, .boxed th { height: 15px; }
.info { margin-top: 3px; }
.info th { padding-left: 7px; }
.info th:first-child { width: 127px; }
.info td { width: 305px; }
.contacts { width: 100%; margin-top: 17px; table-layout: fixed; }
.contacts th { height: 15px; }
.contacts td { height: 38px; border: 1px solid #000; }
.c1 { width: 186px; padding-left: 56px; }
.c2 { width: 126px; padding-left: 8px; }
.c3 { padding-left: 117px; }
.lading { margin-top: 16px; padding-left: 16px; text-align: center; font-weight: 700; }
.lading span { background: #ff0; }
.lading u { text-decoration: underline double; }
.terms th { padding-left: 1px; }
.terms th:first-child { width: 103px; }
.terms td:nth-child(2) { width: 239px; }
.terms th:nth-child(3) { width: 97px; }
.remarks { margin-top: 16px; padding-left: 43px; line-height: 16px; }
.items { width: 100%; margin-top: 16px; table-layout: fixed; font: 13px/15px "Liberation Sans", Arial, sans-serif; }
.items thead th, .items td { border: 1px solid #000; }
.items thead th { text-align: center; }
.items td { padding-left: 1px; vertical-align: top; white-space: nowrap; }
.items .q { text-align: center; }
.items .n { padding: 0; text-align: right; vertical-align: bottom; }
.items .n:nth-child(4) { padding-right: 1px; }
.items tfoot th { text-align: right; }
.k1 { width: 48px; }
.k2 { width: 108px; }
.k3 { width: 270px; }
.k4 { width: 90px; }
.k5 { width: 90px; }
.notes { margin: -2px 0 0 -5px; font: 13px/15px "Liberation Sans", Arial, sans-serif; }
.notes b { display: block; line-height: 16px; }

/* floating toolbar over the selection */
.mini {
  position: absolute;
  left: 209px;
  top: 125px;
  display: flex;
  width: 402px;
  height: 67px;
  padding: 5px 0 0 5px;
  border: 1px solid #616161;
  border-radius: 5px;
  background: #fff;
  box-shadow: 0 6px 10px #0003;
  font: 11px/15px "Open Sans", "Noto Sans", sans-serif;
  color: #242424;
}
.mini .rows { gap: 5px; width: 253px; }
.mini .tool { width: 24px; }
.mini .face { width: 77px; }
.mini .face select { padding-right: 9px; font-size: 11px; }
.mini .size { width: 45px; margin-right: 0; }
.pair { display: flex; width: 39px; border-radius: 4px; box-shadow: inset 0 0 0 1px #c4c4c4; }
.pair .tool { background: #d9dadc; border-radius: 4px 0 0 4px; box-shadow: inset 0 0 0 1px #b0b0b0; }
.cmd { display: flex; justify-content: center; flex: 1; height: 58px; margin-top: -1px; border-left: 1px solid #d1d1d1; }
.cmd.wide { flex: none; width: 83px; gap: 5px; }
.cmd button { display: flex; flex-direction: column; align-items: center; padding-top: 1px; gap: 8px; }
.cmd button span { display: flex; align-items: center; margin-left: 6px; }
.cmd .tall { display: block; padding: 0; }
.cmd .tall svg { margin: 0 auto 2px; }

/* status bar */
.statusbar {
  display: flex;
  align-items: center;
  gap: 19px;
  flex: none;
  height: 23px;
  padding-left: 12px;
  border-top: 1px solid #fff;
  border-bottom: 1px solid #b5b3bd;
  background: #f4f4f5;
  font-size: 11px;
}
.with { display: flex; align-items: center; gap: 3px; }
.views { display: flex; align-items: center; margin-left: auto; padding-right: 8px; }
.focus { margin: 0 12px 0 17px; }
.view { display: flex; align-items: center; justify-content: center; width: 40px; height: 21px; }
.view.on { background: #dcdee1; }
.zoom { display: flex; align-items: center; gap: 4px; margin: 0 12px 0 4px; }
.zoom button { width: 10px; font-size: 16px; line-height: 16px; }
.zoom input { appearance: none; width: 100px; height: 12px; margin: 0; background: linear-gradient(#666, #666) center / 100% 1px no-repeat; }
.zoom input::-webkit-slider-thumb { appearance: none; width: 5px; height: 11px; background: #616161; }

/* taskbar */
.taskbar { position: relative; display: flex; align-items: center; flex: none; height: 47px; padding: 0 20px; background: #dedbee; }
.hills { position: absolute; inset: 0; width: 100%; height: 100%; }
.taskbar > :not(.hills) { position: relative; top: -1px; }
.start { margin-right: 14px; }
.pill {
  display: flex;
  align-items: center;
  gap: 9px;
  width: 218px;
  height: 31px;
  padding: 0 11px;
  border: 1px solid #d0cfdc;
  border-radius: 16px;
  background: #f3f3f6;
  font-size: 13px;
}
.flip { transform: scaleX(-1); }
.apps { display: flex; gap: 20px; margin-left: 13px; }
.app { position: relative; height: 24px; }
.run::after { content: ""; position: absolute; left: 9px; top: 28px; width: 6px; height: 3px; border-radius: 2px; background: #85838c; }
.tick { position: absolute; right: -6px; top: -6px; width: 16px; height: 16px; }
.taskbar time { margin-left: auto; text-align: right; font-size: 11px; color: #444; }
```
